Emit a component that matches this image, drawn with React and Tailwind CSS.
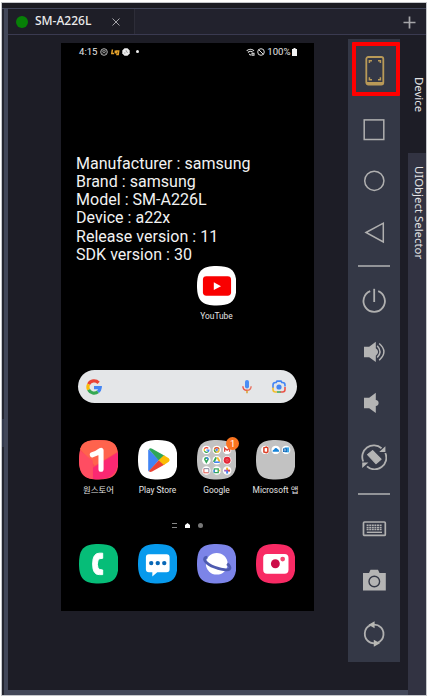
import React from "react";

const SQUIRCLE = "M0 20C0 5 5 0 20 0S40 5 40 20S35 40 20 40S0 35 0 20Z";

function AppIcon({ fill, children }) {
  return (
    <svg viewBox="0 0 40 40" className="block h-[39.5px] w-[39.5px] shrink-0">
      <path d={SQUIRCLE} fill={fill} />
      {children}
    </svg>
  );
}

function Labeled({ label, children }) {
  return (
    <div className="flex h-[57px] w-[59px] flex-col items-center">
      {children}
      <span className="mt-[4.5px] text-[8.4px] leading-[12px] whitespace-nowrap text-[#e4e4e4]">{label}</span>
    </div>
  );
}

function GoogleG() {
  return (
    <g fill="none" strokeWidth="3.2">
      <path d="M12.6 3.8A6.2 6.2 0 0 0 2.6 5.2" stroke="#ea4335" />
      <path d="M2.6 5.2A6.2 6.2 0 0 0 2.6 10.8" stroke="#fbbc05" />
      <path d="M2.6 10.8A6.2 6.2 0 0 0 12 12.8" stroke="#34a853" />
      <path d="M12 12.8A6.2 6.2 0 0 0 14.2 8.6H8" stroke="#4285f4" />
    </g>
  );
}

function StatusBar() {
  return (
    <div className="flex h-[15px] items-center justify-between pr-[17px] pl-[18px] text-[9.6px] leading-none text-[#e4e4e4]">
      <div className="flex items-center">
        <span>4:15</span>
        <svg viewBox="0 0 8 8" className="ml-[2px] h-[8px] w-[8px]" fill="none" stroke="#c8c8c8" strokeWidth=".9">
          <circle cx="4" cy="4" r="3.3" />
          <path d="M1.8 3.6C3 2.5 5 2.5 6.2 3.6M2.5 5.2C3.5 4.3 4.5 4.3 5.5 5.2" />
        </svg>
        <svg viewBox="0 0 9 8" className="ml-[3px] h-[8px] w-[9px]" fill="none" stroke="#e5a22b" strokeWidth="1.5">
          <path d="M1.4 1.5L.8 5.5H3M4.3 2.5V5.5M5.6 5.5V3H7.7L7.2 6.5H5.2" />
        </svg>
        <svg viewBox="0 0 8 8" className="ml-[2px] h-[8px] w-[8px]">
          <path d="M2.5 .3H5.5L7.7 2.5V5.5L5.5 7.7H2.5L.3 5.5V2.5Z" fill="#eee" />
          <path d="M4 2L4.5 4L6 4.5M2 5H3.5" stroke="#777" strokeWidth=".6" fill="none" />
        </svg>
        <span className="ml-[6px] h-[3px] w-[3px] rounded-full bg-[#eee]" />
      </div>
      <div className="flex items-center">
        <svg viewBox="0 0 9 8" className="h-[8px] w-[9px]" fill="none" stroke="#ddd" strokeWidth="1.1">
          <path d="M.7 2.8C2.8 .7 6 .7 8 2.8M2 4.5C3.5 3 5.2 3 6.6 4.2M3.2 6L4.8 7.2M6 5.3V7.2H8V5.3Z" />
        </svg>
        <svg viewBox="0 0 8 8" className="ml-[2px] h-[8px] w-[8px]" fill="none" stroke="#ddd" strokeWidth="1">
          <circle cx="4" cy="4" r="3.3" />
          <path d="M1.8 1.8L6.2 6.2" />
        </svg>
        <span className="ml-[2.5px]">100%</span>
        <svg viewBox="0 0 5 8" className="ml-px h-[8px] w-[5px]" fill="#f2f2f2">
          <path d="M1.5 0H3.5V1H5V8H0V1H1.5Z" />
        </svg>
      </div>
    </div>
  );
}

function SearchBar() {
  return (
    <div className="mr-[16.5px] ml-[17px] mt-[47px] flex h-[33px] items-center rounded-full bg-[#e4e6e8] pr-[11.5px] pl-[8px]">
      <svg viewBox="0 0 16 16" className="h-[16px] w-[16px]">
        <GoogleG />
      </svg>
      <svg viewBox="0 0 10 14" className="ml-auto h-[14px] w-[10px]" fill="none">
        <rect x="3" y="0" width="4" height="8.4" rx="2" fill="#4a8df5" />
        <path d="M.9 6.2C.9 8.5 2.3 10.3 5 10.3" stroke="#eb5144" strokeWidth="1.4" />
        <path d="M5 10.3C7.7 10.3 9.1 8.5 9.1 6.2" stroke="#e9705e" strokeWidth="1.4" />
        <path d="M5 10.5V13.2" stroke="#d8a02c" strokeWidth="1.5" />
      </svg>
      <svg viewBox="0 0 14 13" className="ml-[20px] h-[13px] w-[14px]" fill="none" strokeWidth="1.6">
        <path d="M1 8V5Q1 2.5 3.5 2.5H4.2L5 1.1H9L9.8 2.5H10.5Q13 2.5 13 5V6.5" stroke="#4285f4" />
        <path d="M1 7.5V9.5Q1 12 3.5 12H5" stroke="#f4bd2b" />
        <path d="M5 12H9" stroke="#43a95b" />
        <path d="M13 7V9.5Q13 12 10.5 12H8.5" stroke="#e95348" />
        <circle cx="7" cy="7" r="2.6" fill="#4285f4" />
      </svg>
    </div>
  );
}

function OneStore() {
  return (
    <AppIcon fill="#fc4a56">
      <path d="M1 9Q3 1 14 .3H26Q38 1 39 12L16 26Z" fill="#ff634d" />
      <path d="M40 12L14 28V39.5Q39 42 40 20Z" fill="#fb2872" />
      <path d="M1 11L14 21V39.5Q0 38 0 20Z" fill="#ff4d62" />
      <path d="M13.5 15Q18.5 13.5 22.3 10.5V29.5" fill="none" stroke="#fff" strokeWidth="5.2" strokeLinecap="round" strokeLinejoin="round" />
    </AppIcon>
  );
}

function PlayStore() {
  return (
    <AppIcon fill="#fff">
      <path d="M11 9.5L21.5 20L11 32Q10.3 31.5 10.3 30V11Q10.3 9.8 11 9.5Z" fill="#4285f4" />
      <path d="M11 9.3Q12.3 7.6 14.3 8.8L27 16L21.5 21Z" fill="#2fa65a" />
      <path d="M11 31.5L21.5 20L27 24.8L14.3 32Q12 33.2 11 31.5Z" fill="#ea4335" />
      <path d="M20.8 20.5L26.2 15.5L31.2 18.6Q33 20.3 31.2 22L26.2 25.2Z" fill="#fbbc04" />
    </AppIcon>
  );
}

function GoogleFolder() {
  const dots = [];
  for (const y of [10, 20.5, 31]) for (const x of [9.5, 20, 30.5]) dots.push([x, y]);
  return (
    <div className="relative h-[39.5px] w-[39.5px]">
      <AppIcon fill="#c2c2c2">
        {dots.map(([x, y]) => (
          <circle key={`${x}-${y}`} cx={x} cy={y} r="4.3" fill="#fff" />
        ))}
        <g transform="translate(6.5 7) scale(.39)"><GoogleG /></g>
        <circle cx="20" cy="10" r="3" fill="#efb72c" />
        <path d="M17.2 9A3 3 0 0 1 22.8 9H20Z" fill="#df4739" />
        <path d="M17.2 9L20 13A3 3 0 0 1 17.2 9Z" fill="#36a256" />
        <circle cx="20" cy="10" r="1.4" fill="#4285f4" stroke="#fff" strokeWidth=".4" />
        <path d="M28 12V8.2L30.5 10.2L33 8.2V12" fill="none" stroke="#e04b3e" strokeWidth="1.4" />
        <path d="M9.5 24L7.2 20Q7 17.5 9.5 17.3Q12 17.5 11.8 20Z" fill="#36a65a" />
        <path d="M9.5 17.3Q12 17.5 11.8 20L9.5 19Z" fill="#4285f4" />
        <circle cx="9.5" cy="19.7" r=".8" fill="#fff" />
        <path d="M19.4 17.6L17 22.3" stroke="#36a65a" strokeWidth="1.9" />
        <path d="M20.5 17.6L23 22" stroke="#f6bd27" strokeWidth="1.9" />
        <path d="M17.4 22.5H23" stroke="#4285f4" strokeWidth="1.6" />
        <circle cx="30.5" cy="20.5" r="3.5" fill="#e52635" />
        <circle cx="30.5" cy="20.5" r="1.2" fill="none" stroke="#f4848a" strokeWidth=".5" />
        <path d="M7 29V33.2H12" fill="none" stroke="#e6554a" strokeWidth="1" />
        <path d="M7 29H12V33" fill="none" stroke="#8588a0" strokeWidth="1" />
        <path d="M17.5 33V29.3H21.5V33Z" fill="none" stroke="#36a65a" strokeWidth="1.3" />
        <path d="M17.3 30V33" stroke="#4285f4" strokeWidth="1.3" />
        <path d="M22 31L23.6 29.7V32.5Z" fill="#f4b92c" />
        <path d="M30.5 28V31" stroke="#efb72c" strokeWidth="2" />
        <path d="M30.5 31H33.5" stroke="#e04b3e" strokeWidth="2" />
        <path d="M30.5 31V34" stroke="#4285f4" strokeWidth="2" />
        <path d="M27.5 31H30.5" stroke="#a35fc0" strokeWidth="1.8" />
      </AppIcon>
      <span className="absolute -top-[3px] -right-[3px] flex h-[13px] w-[13px] items-center justify-center rounded-full bg-[#fa7420] text-[9.5px] leading-none text-white">1</span>
    </div>
  );
}

function MicrosoftFolder() {
  return (
    <AppIcon fill="#c2c2c2">
      {[9.5, 20, 30.5].map((x) => (
        <circle key={x} cx={x} cy="10" r="4.3" fill="#fff" />
      ))}
      <path d="M8 8L10.5 7.2L12 8V12L10.5 12.8L8 12Z" fill="none" stroke="#dc3e25" strokeWidth="1.5" />
      <path d="M16.8 11.8Q16.6 9.8 18.3 9.5Q20 7 22 9.3Q23.7 9.6 23.3 11.8Z" fill="#1683d8" />
      <path d="M29 7.5H33.5V12.5H29Z" fill="#39a6e8" />
      <rect x="27.3" y="8.5" width="4" height="3.6" fill="#0b63b5" />
      <circle cx="29.3" cy="10.3" r=".9" fill="none" stroke="#fff" strokeWidth=".5" />
    </AppIcon>
  );
}

function Phone() {
  return (
    <div className="ml-[53px] flex h-[568px] w-[252.5px] flex-col bg-black pt-px font-[Roboto,'Noto_Sans_CJK_KR',sans-serif]">
      <StatusBar />
      <div className="mt-[96px] h-[109px] pl-[15px] text-[16px] leading-[18.15px] tracking-[0.03px] whitespace-nowrap text-[#f2f2f2]">
        <p>Manufacturer : samsung</p>
        <p>Brand : samsung</p>
        <p>Model : SM-A226L</p>
        <p>Device : a22x</p>
        <p>Release version : 11</p>
        <p>SDK version : 30</p>
      </div>
      <div className="mt-[2px] flex pl-[126px]">
        <Labeled label="YouTube">
          <AppIcon fill="#fff">
            <rect x="6" y="10.5" width="28.5" height="19.5" rx="3.5" fill="#f90000" />
            <path d="M17 16.5L24.3 20.4L17 24.3Z" fill="#fff" />
          </AppIcon>
        </Labeled>
      </div>
      <SearchBar />
      <div className="mt-[37px] flex pl-[8px]">
        <Labeled label="원스토어"><OneStore /></Labeled>
        <Labeled label="Play Store"><PlayStore /></Labeled>
        <Labeled label="Google"><GoogleFolder /></Labeled>
        <Labeled label="Microsoft 앱"><MicrosoftFolder /></Labeled>
      </div>
      <div className="mt-[25px] flex h-[6px] items-center pl-[111px]">
        <svg viewBox="0 0 5 5" className="h-[5px] w-[5px]" stroke="#888"><path d="M0 .5H5M0 4.5H5" /></svg>
        <svg viewBox="0 0 5 5" className="ml-[8px] h-[5px] w-[5px]" fill="#fff"><path d="M2.5 0L5 2V5H0V2Z" /></svg>
        <span className="ml-[8px] h-[5px] w-[5px] rounded-full bg-[#777]" />
      </div>
      <div className="mt-[16px] flex pl-[8px]">
        <div className="flex w-[59px] justify-center">
          <AppIcon fill="#06bd78">
            <path d="M24 9.3H20.5Q13.8 9.3 13.8 20.3T20.5 31H24V26.3Q20.5 26.3 19.3 24.5Q17.8 20.5 19.3 16.3Q20.5 14.3 24 14.5Z" fill="#fff" stroke="#fff" strokeLinejoin="round" />
          </AppIcon>
        </div>
        <div className="flex w-[59px] justify-center">
          <AppIcon fill="#079aed">
            <path d="M11 10.5H29Q32 10.5 32 13.5V25.5Q32 28.5 29 28.5H19.5L14.5 33V28.5H11Q8 28.5 8 25.5V13.5Q8 10.5 11 10.5Z" fill="#fff" />
            <g fill="#0767b6">
              <circle cx="13.4" cy="19.3" r="2.2" />
              <circle cx="20" cy="19.3" r="2.2" />
              <circle cx="26.6" cy="19.3" r="2.2" />
            </g>
          </AppIcon>
        </div>
        <div className="flex w-[59px] justify-center">
          <AppIcon fill="#7c84e8">
            <circle cx="20" cy="20" r="11" fill="#fff" />
            <path d="M10.5 13.2C4.5 13.6 8 20 18 23.6C27.5 27.2 35.5 27.2 33 22.8C32.5 21.7 31.5 20.7 30.5 20" fill="none" stroke="#4e5bb0" strokeWidth="2.8" />
          </AppIcon>
        </div>
        <div className="flex w-[59px] justify-center">
          <AppIcon fill="#f82a64">
            <rect x="7.3" y="10" width="25.6" height="20" rx="4" fill="#fff" />
            <circle cx="19.6" cy="20" r="4.5" fill="#cc0b48" />
            <circle cx="27" cy="15.2" r="2.4" fill="#f44771" />
          </AppIcon>
        </div>
      </div>
    </div>
  );
}

function Tool({ className, children }) {
  return <div className={`flex shrink-0 items-center justify-center ${className}`}>{children}</div>;
}

function Glyph({ children, solid }) {
  return (
    <svg
      viewBox="0 0 26 26"
      className="h-[26px] w-[26px]"
      fill={solid ? "#b4b4b4" : "none"}
      stroke={solid ? "none" : "#b0b0b0"}
      strokeWidth="1.5"
    >
      {children}
    </svg>
  );
}

function Toolbar() {
  return (
    <div className="relative mt-[4px] flex h-[623px] w-[52px] flex-col bg-[#343846]">
      <Tool className="h-[63px]">
        <svg viewBox="0 0 20 30" className="ml-[2px] h-[30px] w-[20px]" fill="none" stroke="#b99a58">
          <rect x="1.3" y="1" width="17" height="27.5" rx="2" strokeWidth="1.8" />
          <path d="M1.3 27.2H18.3" strokeWidth="2.4" />
          <path d="M4.4 7V4.7H7M13 4.7H15.4V7M15.4 21.3V23.8H13M7 23.8H4.4V21.3" strokeWidth="1.5" />
        </svg>
      </Tool>
      <Tool className="h-[56px]"><Glyph><rect x="3.2" y="2.9" width="19.6" height="19.6" /></Glyph></Tool>
      <Tool className="h-[46px]"><Glyph><circle cx="13.3" cy="12.8" r="9.6" /></Glyph></Tool>
      <Tool className="h-[57px]"><Glyph><path d="M5 12.5L22.3 3.2V22Z" /></Glyph></Tool>
      <Tool className="h-[10px]"><div className="h-[2px] w-[32px] bg-[#929498]" /></Tool>
      <Tool className="h-[60px]">
        <Glyph>
          <g strokeWidth="1.8"><path d="M9.2 3.2A10.7 10.7 0 1 0 17.2 3.2" /><path d="M13.2 .8V14" /></g>
        </Glyph>
      </Tool>
      <Tool className="h-[42px]">
        <Glyph solid>
          <path d="M3 7.8H8.2L14.8 2.7V9.2Q19.5 12.7 14.8 16.8V23L8.2 18.2H3Z" />
          <path d="M16.2 6.8Q21.8 12.8 16.2 18.6M18.2 4.5Q27.6 12.7 18.2 21.2" fill="none" stroke="#b4b4b4" strokeWidth="1.5" />
        </Glyph>
      </Tool>
      <Tool className="h-[60px]">
        <Glyph solid><path d="M3 7.8H8.2L14.8 2.7V9.9Q17.6 10.2 17.6 13Q17.6 15.6 14.8 16.1V23L8.2 18.2H3Z" /></Glyph>
      </Tool>
      <Tool className="h-[48px]">
        <Glyph>
          <path d="M2.2 17.5A11.6 11.6 0 0 1 20.5 4.2M24.3 9A11.6 11.6 0 0 1 6 22.4" strokeWidth="1.8" />
          <path d="M24.4 2.2V8H18.2Z M1.2 24V18.4H7.4Z" fill="#b4b4b4" stroke="none" />
          <path d="M6.6 10.6L11.6 6.6L20 15.2L15 19.6Z" fill="#b4b4b4" stroke="#b4b4b4" strokeWidth="1.2" strokeLinejoin="round" />
        </Glyph>
      </Tool>
      <Tool className="h-[26px]"><div className="h-[2px] w-[32px] bg-[#929498]" /></Tool>
      <Tool className="h-[43px]">
        <Glyph>
          <rect x="2.5" y="6" width="21.8" height="13.4" rx="1" strokeWidth="1.7" />
          <path d="M5.6 9.2H21.2M5.6 11.4H21.2M5.6 13.6H21.2" strokeDasharray="2 .6" strokeWidth="1.5" />
          <path d="M5.8 16.3H21" strokeWidth="1.4" />
        </Glyph>
      </Tool>
      <Tool className="h-[60px]">
        <Glyph solid>
          <path d="M2 6H8L9.5 2.8H17L18.5 6H24.8V23.5H2Z" />
          <circle cx="13.3" cy="14.5" r="5.3" fill="none" stroke="#343846" strokeWidth="1.4" />
        </Glyph>
      </Tool>
      <Tool className="h-[48px]">
        <Glyph>
          <path d="M8.5 21A9.4 9.4 0 0 1 9.5 4.2M18 5A9.4 9.4 0 0 1 16.5 21.8M11.5 3.7Q16.5 3 19.8 6.3M14.5 22.3Q9.5 22.8 6.5 19.6" strokeWidth="1.8" />
          <path d="M13.6 .3V7.2L7.5 3.8Z M12.8 18.8V25.7L19 22.2Z" fill="#b8b8b4" stroke="none" />
        </Glyph>
      </Tool>
      <div className="absolute top-[3px] left-[4px] h-[54px] w-[48px] rounded-[1px] border-[4px] border-[#ff0000]" />
    </div>
  );
}

export default function App() {
  return (
    <div className="h-[699px] w-[429px] overflow-hidden bg-white pt-[2px] pl-px">
      <div className="flex h-[694px] w-[426px] flex-col overflow-hidden border border-[#c5c7cb] bg-[#1d1d26] font-['Noto_Sans',sans-serif]">
        <div className="h-[5px] shrink-0 bg-[#1c1c23]" />
        <div className="flex h-[687px]">
          <div className="flex h-full w-[6px] shrink-0 border-t border-[#444a5d] bg-[#23252f]">
            <div className="mt-[410px] h-[28px] w-[2px] bg-[#343a4c]" />
            <div className="h-full w-[4px] bg-[#424759]" />
          </div>
          <div className="flex min-w-0 flex-1 flex-col">
            <header className="flex h-[27px] shrink-0 items-stretch border-t border-b border-t-[#42465a] border-b-[#3a3a50] bg-[#22222d]">
              <div className="flex w-[127px] items-center border-r border-[#2d2d38] bg-[#1e1e27] pl-[8px]">
                <span className="h-[12px] w-[12px] rounded-full bg-[#078007]" />
                <span className="ml-[7px] w-[60px] -translate-y-px text-[12px] leading-none font-medium whitespace-nowrap text-[#ececec]">SM-A226L</span>
                <svg viewBox="0 0 8 8" className="mt-[1px] ml-[16.5px] h-[8px] w-[8px]" stroke="#a3a3a8" strokeWidth="1"><path d="M.5 .5L7.5 7.5M7.5 .5L.5 7.5" /></svg>
              </div>
              <div className="flex flex-1 items-center justify-end pr-[10px]">
                <svg viewBox="0 0 13 13" className="mt-px h-[13px] w-[13px]" stroke="#a6a6aa" strokeWidth="1.7"><path d="M6.5 .5V12.5M.5 6.5H12.5" /></svg>
              </div>
            </header>
            <div className="flex h-[660px]">
              <div className="flex w-[400px] shrink-0 flex-col border-b-[5px] border-[#424759]">
                <div className="flex h-[655px]">
                  <div className="w-[340px] pt-[8px]"><Phone /></div>
                  <Toolbar />
                </div>
              </div>
              <div className="flex w-[18px] shrink-0 flex-col text-[11.4px] leading-[14px] text-[#e4e4e6]">
                <div className="flex h-[118px] w-[18px] justify-end pt-[42px]">
                  <span className="whitespace-nowrap [writing-mode:vertical-rl]">Device</span>
                </div>
                <div className="flex h-[542px] w-[18px] justify-end bg-[#323342] pt-[13px]">
                  <span className="whitespace-nowrap [writing-mode:vertical-rl]">UIObject Selector</span>
                </div>
              </div>
            </div>
          </div>
        </div>
      </div>
    </div>
  );
}
